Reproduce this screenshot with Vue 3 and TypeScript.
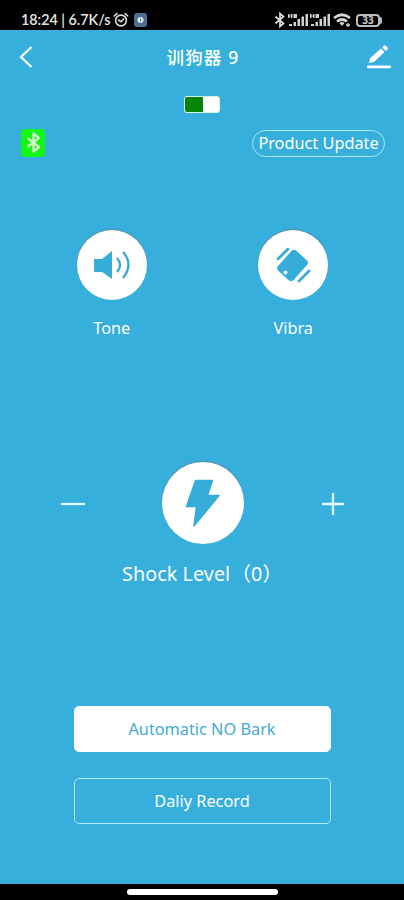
<script setup lang="ts">
import { ref } from 'vue'

const level = ref<number>(0)
const charge = 53
const signals = [0, 1]

function change(step: number): void {
  level.value = Math.min(100, Math.max(0, level.value + step))
}
</script>

<template>
  <div class="screen">
    <header class="status">
      <div class="status-left">
        <span class="clock">18:24 | 6.7K/s</span>
        <svg class="alarm" width="16" height="16" viewBox="0 0 16 16" fill="none" stroke="#ddd" stroke-width="1.6" stroke-linecap="round">
          <circle cx="8" cy="8.5" r="5.4" /><path d="M1.300 4 4 1.700M14.700 4 12 1.700M5.500 8 8 9.800 10.700 7" />
        </svg>
        <svg class="app-dot" width="13" height="14" viewBox="0 0 13 14">
          <rect width="13" height="14" rx="3" fill="#4b6e91" /><circle cx="6.500" cy="7" r="3" fill="#e3edf4" /><path d="M6.500 5.500v3" stroke="#45627e" />
        </svg>
      </div>
      <div class="status-right">
        <svg width="12" height="16" viewBox="0 0 12 16" fill="none" stroke="#ddd" stroke-width="1.700"><path d="m1.500 4.500 8 7L6 14.500v-13l3.500 3-8 7" /></svg>
        <svg v-for="s in signals" :key="s" class="signal" width="20" height="14" viewBox="0 0 20 14" fill="#d0d0d0">
          <path d="M0 1h1.500v4H0zM3 1h1.500v4H3zM1 2.500h2v1H1zM5.500 1H9v4H5.500zM1 11h3v2H1zM5.500 9H8v4H5.500zM9.500 6H12v7H9.500zM13.500 3.500H16V13h-2.500zM17.500 1H20v12h-2.500z" />
        </svg>
        <svg class="wifi" width="18" height="14" viewBox="0 0 18 14" fill="none" stroke="#d5d5d5" stroke-width="2.700">
          <path d="M1 5q8-6.500 16 0M4 8.500q5-4 10 0" /><path d="m6.500 10 2.500 3 2.500-3q-2.500-2-5 0" fill="#d5d5d5" stroke="none" /><path d="M13 12h4M15 10v4" stroke-width="1.300" />
        </svg>
        <div class="phone-battery"><span>33</span></div>
        <i class="battery-tip" />
      </div>
    </header>

    <main class="panel">
      <nav class="title-bar">
        <svg width="14" height="22" viewBox="0 0 14 22" fill="none" stroke="#fff" stroke-width="2.200"><path d="M12.500 1 2 11l10.500 10" /></svg>
        <h1>训狗器 9</h1>
        <svg class="edit" width="24" height="24" viewBox="0 0 24 24" fill="#fff">
          <path d="m2 18 1.200-5L14 3.500l3.500 3.500L7 17zM15.200 2.400l1.600-1.600q1-.8 2 0l1.700 1.700q1 1 0 2L19 6z" /><rect y="20.500" width="24" height="2.700" rx="1" />
        </svg>
      </nav>
      <div class="charge"><i :style="{ width: charge + '%' }" /></div>
      <div class="device-row">
        <div class="bt">
          <svg width="15" height="21" viewBox="0 0 15 21" fill="none" stroke="#d0ffcc" stroke-width="2.300" stroke-linejoin="round"><path d="m1.500 6 11.500 9-5.500 4.500v-18L13 6 1.500 15" /></svg>
        </div>
        <button class="update">Product Update</button>
      </div>

      <section class="modes">
        <div class="mode">
          <button class="round">
            <svg width="38" height="30" viewBox="0 0 38 30" fill="#36add9"><path d="M1 9h8L19 1v28L9 22H1z" /><path d="M24 8q6 7 0 14M30 2q11 12 0 26" fill="none" stroke="#36add9" stroke-width="2.400" /></svg>
          </button>
          <span>Tone</span>
        </div>
        <div class="mode">
          <button class="round">
            <svg width="36" height="36" viewBox="0 0 36 36" fill="#36add9"><rect x="7" y="5" width="21" height="27" rx="3.500" transform="rotate(42 17.500 18.500)" /><path d="m3 12 10-10M24 34l10-10" stroke="#36add9" stroke-width="2.800" stroke-linecap="round" /><circle cx="10.500" cy="25.500" r="1.900" fill="#fff" /></svg>
          </button>
          <span>Vibra</span>
        </div>
      </section>

      <section class="shock">
        <div class="shock-row">
          <button class="step" aria-label="Decrease" @click="change(-1)"><svg width="24" height="24" viewBox="0 0 24 24" stroke="#e6fbff" stroke-width="2.200"><path d="M0 13h24" /></svg></button>
          <button class="round big"><svg width="36" height="48" viewBox="0 0 36 48" fill="#36add9" stroke="#36add9" stroke-width="1.500" stroke-linejoin="round"><path d="M10.500 1.500h17l-5 15h11.500L9 47l2.500-19.500h-10z" /></svg></button>
          <button class="step" aria-label="Increase" @click="change(1)"><svg width="22" height="24" viewBox="0 0 22 24" stroke="#e6fbff" stroke-width="2.400"><path d="M0 13h22M11 2v22" /></svg></button>
        </div>
        <p class="level">Shock Level<span class="count">（{{ level }}）</span></p>
      </section>

      <section class="actions">
        <button class="action solid">Automatic NO Bark</button>
        <button class="action">Daliy Record</button>
      </section>
    </main>
    <footer class="home"><i /></footer>
  </div>
</template>

<style>
body { background: #000; }
</style>

<style scoped>
.screen { width: 404px; height: 900px; display: flex; flex-direction: column; background: #000; color: #fff; font-family: "Noto Sans", "Noto Sans CJK SC", sans-serif; }
.screen * { box-sizing: border-box; }
svg { display: block; flex: none; }
button { padding: 0; border: 0; background: none; color: inherit; font: inherit; }
.status { height: 30px; display: flex; justify-content: space-between; padding: 10px 22px 0 21px; }
.status-left, .status-right { display: flex; align-items: center; height: 20px; }
.clock { font-family: Lato, sans-serif; width: 92px; font-size: 14.3px; font-weight: 600; line-height: 20px; white-space: nowrap; color: #e5e5e5; }
.app-dot { margin-left: 5px; }
.signal { margin-left: 2px; }
.wifi { margin-left: 3px; }
.phone-battery { margin-left: 5px; width: 24px; height: 13px; border: 2px solid #bbb; border-radius: 4px; display: flex; align-items: center; justify-content: center; font-size: 10px; font-weight: 700; line-height: 9px; color: #ccc; }
.battery-tip { width: 2px; height: 7px; background: #bbb; border-radius: 0 2px 2px 0; }
.panel { height: 854px; background: #36afdd; display: flex; flex-direction: column; }
.title-bar { height: 54px; display: flex; align-items: center; justify-content: space-between; padding: 0 13px 0 19px; }
h1 { margin: 0 0 0 6px; font-size: 17.5px; line-height: 24px; font-weight: 500; letter-spacing: 1.2px; }
.charge { margin: 12px auto 0; width: 36px; height: 17px; border: 1px solid #d6f4e8; border-radius: 3px; background: #fff; overflow: hidden; }
.charge i { display: block; height: 100%; background: #078407; }
.device-row { margin-top: 14px; height: 31px; display: flex; align-items: center; justify-content: space-between; padding: 0 19px 0 21px; }
.bt { width: 24px; height: 28px; border-radius: 4px; background: #12f813; display: flex; align-items: center; justify-content: center; }
.update { margin-top: 2px; width: 133px; height: 27px; border: 1.500px solid #b4e6f5; border-radius: 14px; font-size: 16.3px; line-height: 23px; white-space: nowrap; }
.modes { margin-top: 72px; padding: 0 20px 0 21px; display: grid; grid-template-columns: 1fr 1fr; }
.mode { display: flex; flex-direction: column; align-items: center; font-size: 16.3px; line-height: 24px; gap: 16px; }
.round { width: 70px; height: 70px; border-radius: 50%; background: #fff; display: flex; align-items: center; justify-content: center; box-shadow: 0 -1px 1px #57899e; }
.round.big { width: 82px; height: 82px; margin-right: 2px; }
.shock { margin-top: 122px; }
.shock-row { display: flex; align-items: center; justify-content: space-between; padding: 0 60px 0 61px; }
.level { margin: 16px 0 0 122px; font-size: 19.7px; line-height: 28px; white-space: nowrap; letter-spacing: .1px; }
.count { margin-left: 1px; }
.actions { margin-top: 118px; display: flex; flex-direction: column; align-items: center; gap: 26px; }
.action { width: 257px; height: 46px; border: 1.500px solid #b4e6f5; border-radius: 5px; font-size: 16.3px; line-height: 24px; }
.solid { background: #fff; border-color: #fff; color: #45abd0; }
.home { height: 16px; display: flex; justify-content: center; padding-top: 5px; }
.home i { width: 151px; height: 6px; border-radius: 3px; background: #fff; }
</style>
